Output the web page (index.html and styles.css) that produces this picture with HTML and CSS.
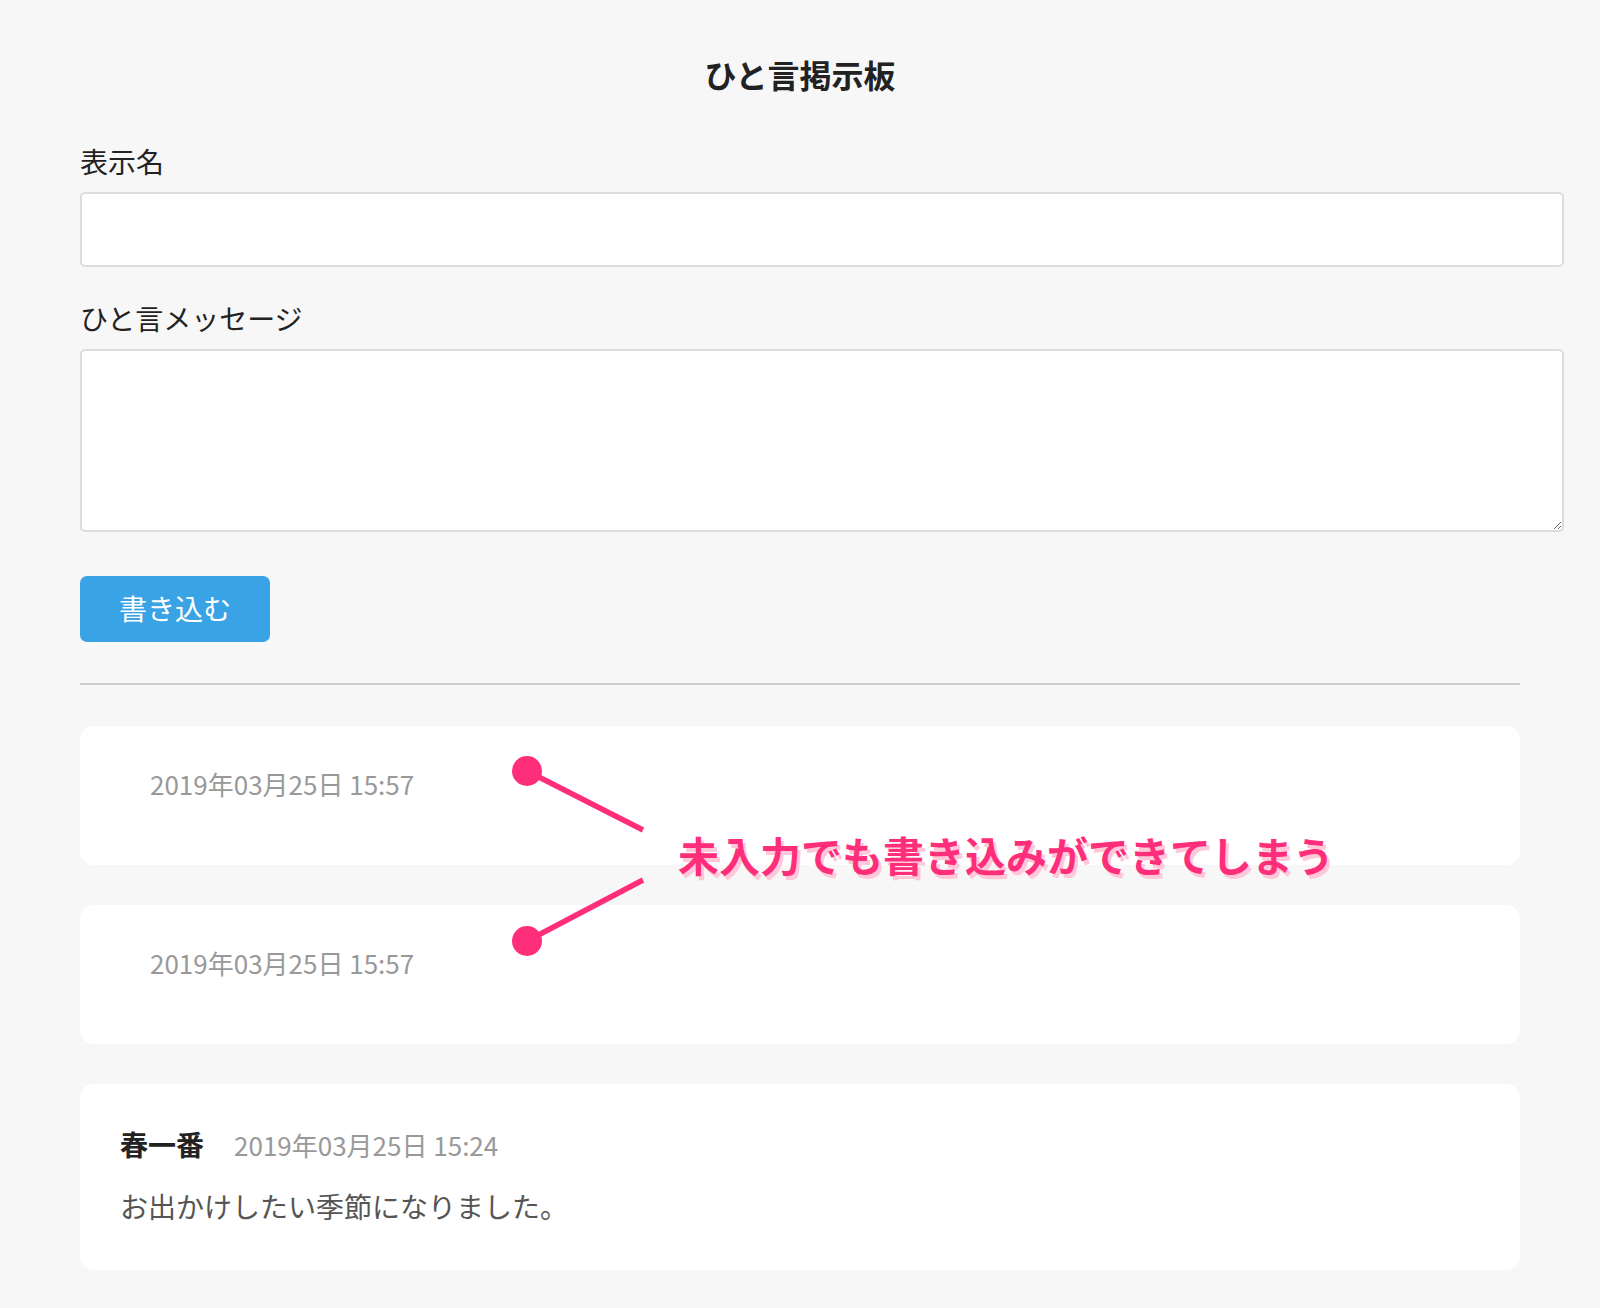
FILE: index.html
```
<!DOCTYPE html>
<html lang="ja">
  <head>
    <meta charset="UTF-8">
    <meta name="viewport" content="width=device-width, initial-scale=1.0">
    <title>ひと言掲示板</title>
    <link rel="stylesheet" href="styles.css">
  </head>
  <body>

    <div class="wrapper">

      <h1>ひと言掲示板</h1>

      <form class="post-form">
        <div class="field">
          <label for="view_name">表示名</label>
          <input id="view_name" type="text" name="view_name">
        </div>
        <div class="field">
          <label for="message">ひと言メッセージ</label>
          <textarea id="message" name="message"></textarea>
        </div>
        <button type="button" class="submit">書き込む</button>
      </form>

      <hr>

      <section class="posts">

        <article class="post">
          <div class="post-head">
            <span class="post-name"></span><time class="post-date">2019年03月25日 15:57</time>
          </div>
          <p class="post-message"></p>
        </article>

        <article class="post">
          <div class="post-head">
            <span class="post-name"></span><time class="post-date">2019年03月25日 15:57</time>
          </div>
          <p class="post-message"></p>
        </article>

        <article class="post">
          <div class="post-head">
            <span class="post-name">春一番</span><time class="post-date">2019年03月25日 15:24</time>
          </div>
          <p class="post-message">お出かけしたい季節になりました。</p>
        </article>

        <!-- annotation over the two blank posts -->
        <svg class="note-lines" width="700" height="320" viewBox="0 0 700 320">
          <line x1="447" y1="45" x2="563" y2="104" />
          <line x1="447" y1="215" x2="563" y2="154" />
          <circle cx="447" cy="45" r="15" />
          <circle cx="447" cy="215" r="15" />
        </svg>
        <div class="note-text">未入力でも書き込みができてしまう</div>

      </section>

    </div>

  </body>
</html>
```

FILE: styles.css
```
html, body {
  margin: 0;
  padding: 0;
}
body {
  background-color: #f7f7f7;
  color: #333;
  font-family: "Noto Sans CJK JP", "Noto Sans", sans-serif;
  font-size: 28px;
}
.wrapper {
  width: 1440px;
  margin: 0 auto;
  padding: 53px 0 40px;
}
h1 {
  margin: 0;
  font-size: 32px;
  line-height: 42px;
  text-align: center;
  color: #222;
}
.post-form {
  margin-top: 47px;
}
.field + .field {
  margin-top: 32px;
}
.field label {
  display: block;
  line-height: 38px;
  margin-bottom: 12px;
  color: #222;
}
.field input,
.field textarea {
  display: block;
  width: 100%;
  padding: 0 20px;
  border: 2px solid #dcdcdc;
  border-radius: 5px;
  background-color: #fff;
  font-family: inherit;
  font-size: 28px;
  color: #333;
  outline: none;
}
.field input {
  height: 71px;
}
.field textarea {
  height: 139px;
  padding: 20px;
}
.submit {
  display: block;
  margin-top: 44px;
  height: 66px;
  padding: 0 39px 3px;
  border: none;
  border-radius: 7px;
  background-color: #3aa3e6;
  color: #fff;
  font-family: inherit;
  font-size: 28px;
}
hr {
  margin: 41px 0 0;
  border: none;
  height: 2px;
  background-color: #cdcdcd;
}
.posts {
  position: relative;
  margin-top: 41px;
}
.post {
  padding: 40px;
  background-color: #fff;
  border-radius: 14px;
}
.post + .post {
  margin-top: 40px;
}
.post-head {
  line-height: 34px;
}
.post-name {
  margin-right: 30px;
  font-weight: bold;
  line-height: 40px;
  color: #222;
}
.post-name:empty {
  line-height: inherit;
}
.post-date {
  font-size: 26px;
  color: #999;
}
.post-message {
  margin: 24px 0 6px;
  line-height: 36px;
  color: #555;
}
.note-lines {
  position: absolute;
  top: 0;
  left: 0;
  pointer-events: none;
}
.note-lines line {
  stroke: #ff2e7b;
  stroke-width: 5.5;
}
.note-lines circle {
  fill: #ff2e7b;
}
.note-text {
  position: absolute;
  top: 104px;
  left: 598px;
  font-size: 41px;
  line-height: 48px;
  font-weight: bold;
  white-space: nowrap;
  color: #ff2e7b;
  text-shadow: 3px 4px 0 #ffc8d8;
}
```
